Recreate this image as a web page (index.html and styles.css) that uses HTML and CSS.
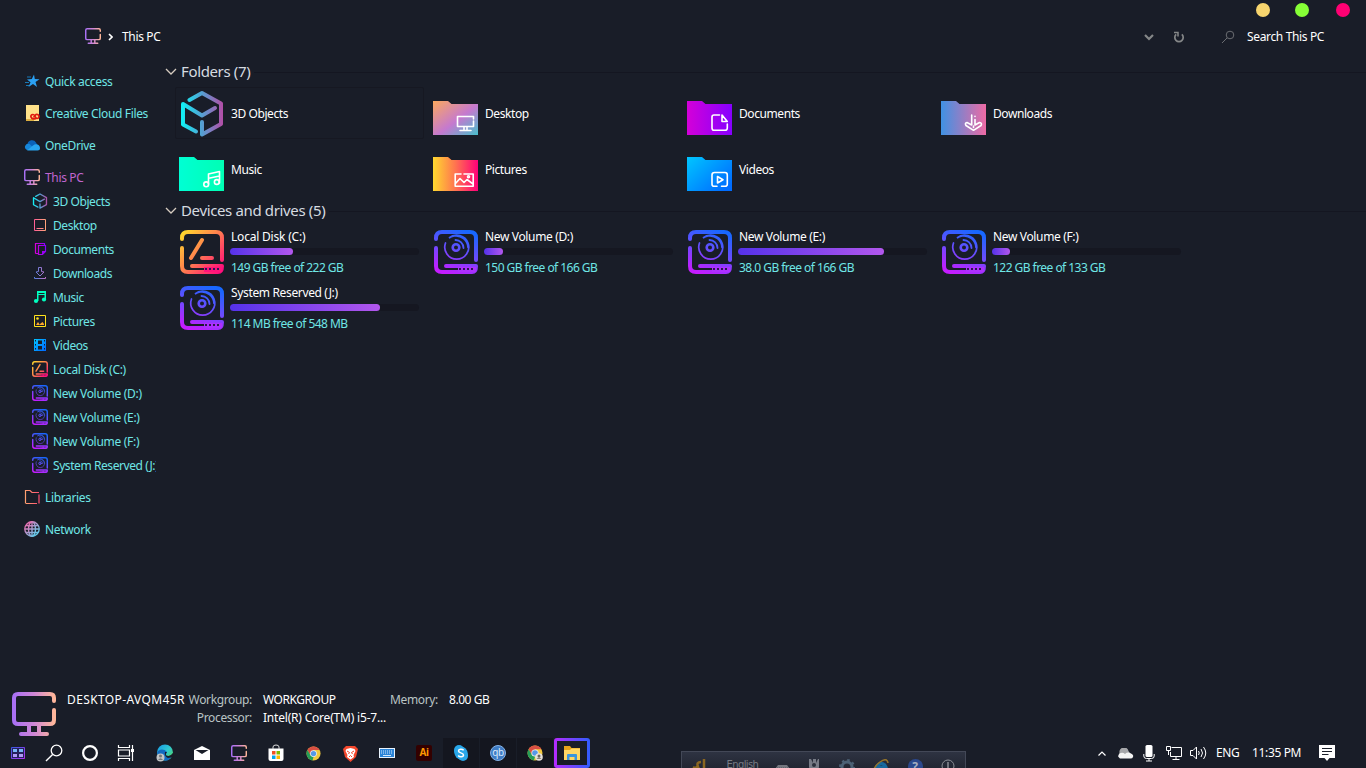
FILE: index.html
```html
<!DOCTYPE html>
<html lang="en">
<head>
<meta charset="utf-8">
<title>This PC</title>
<link rel="stylesheet" href="styles.css">
</head>
<body>
<svg class="defs" width="0" height="0" aria-hidden="true">
  <defs>
    <linearGradient id="gPc" x1="0" x2="1"><stop offset="0" stop-color="#a970f5"/><stop offset=".5" stop-color="#cf86d6"/><stop offset="1" stop-color="#ffb69a"/></linearGradient>
    <linearGradient id="gCube" gradientUnits="userSpaceOnUse" x1="2" y1="0" x2="42" y2="0"><stop offset="0" stop-color="#10f0f4"/><stop offset=".5" stop-color="#559fd2"/><stop offset="1" stop-color="#b050a8"/></linearGradient>
    <linearGradient id="gDrive" gradientUnits="userSpaceOnUse" x1="30" y1="0" x2="14" y2="44"><stop offset="0" stop-color="#1768ff"/><stop offset=".5" stop-color="#6c4bff"/><stop offset="1" stop-color="#c51cff"/></linearGradient>
    <linearGradient id="gDisk" gradientUnits="userSpaceOnUse" x1="0" y1="2" x2="44" y2="42"><stop offset="0" stop-color="#ffe02a"/><stop offset=".5" stop-color="#ff7a50"/><stop offset="1" stop-color="#ff0080"/></linearGradient>
    <linearGradient id="gDesk" x1="0" y1="0" x2="1" y2="1"><stop offset="0" stop-color="#fba95e"/><stop offset=".55" stop-color="#c579cf"/><stop offset="1" stop-color="#48c0cc"/></linearGradient>
    <linearGradient id="gDocs"><stop offset="0" stop-color="#d400d8"/><stop offset="1" stop-color="#8600ff"/></linearGradient>
    <linearGradient id="gDown"><stop offset="0" stop-color="#3f92e4"/><stop offset="1" stop-color="#ee6aa4"/></linearGradient>
    <linearGradient id="gMusic"><stop offset="0" stop-color="#00ffd4"/><stop offset="1" stop-color="#00ffb4"/></linearGradient>
    <linearGradient id="gPics"><stop offset="0" stop-color="#ffd92f"/><stop offset=".5" stop-color="#ff7350"/><stop offset="1" stop-color="#ff0079"/></linearGradient>
    <linearGradient id="gVids" x1="0" y1="0" x2="1" y2=".8"><stop offset="0" stop-color="#00c6ff"/><stop offset="1" stop-color="#006cff"/></linearGradient>
    <linearGradient id="gPink"><stop offset="0" stop-color="#ff5f94"/><stop offset="1" stop-color="#ffa27a"/></linearGradient>
    <linearGradient id="gLib"><stop offset="0" stop-color="#ffa070"/><stop offset="1" stop-color="#ff4f72"/></linearGradient>
    <linearGradient id="gNet" x1="0" y1="0" x2="1" y2="1"><stop offset="0" stop-color="#ff5fa8"/><stop offset="1" stop-color="#48dcf4"/></linearGradient>
    <linearGradient id="gDl" gradientUnits="userSpaceOnUse" x1="0" y1="0" x2="14" y2="0"><stop offset="0" stop-color="#3f82e4"/><stop offset="1" stop-color="#c070c4"/></linearGradient>
    <linearGradient id="gWin" x1="0" y1="0" x2="1" y2="1"><stop offset="0" stop-color="#3a58e0"/><stop offset="1" stop-color="#b030f0"/></linearGradient>
    <linearGradient id="gEdge" x1="0" y1="0" x2="1" y2="1"><stop offset="0" stop-color="#1597e8"/><stop offset=".5" stop-color="#30c8d0"/><stop offset="1" stop-color="#57d848"/></linearGradient>

    <symbol id="cube" viewBox="0 0 44 47">
      <g fill="none" stroke="url(#gCube)" stroke-width="4" stroke-linecap="round" stroke-linejoin="round">
        <path d="M9.500 10L22 3L41 13.500V34L22 44.500V32"/><path d="M16 41.500L3 34.500V14L22 25.500L35 18"/>
      </g>
    </symbol>
    <symbol id="pc" viewBox="0 0 44 44">
      <path fill="none" stroke="url(#gPc)" stroke-width="4" stroke-linecap="round" stroke-linejoin="round" d="M42 9V6Q42 2 38 2H6Q2 2 2 6V28Q2 32 6 32H38Q42 32 42 28V18M17 33V41M27 33V41M9 42H35"/>
    </symbol>
    <symbol id="drive-case" viewBox="0 0 44 44">
      <path d="M2 9V8Q2 2 8 2H36Q42 2 42 8V30M2 18V36Q2 42 8 42H38Q42 42 42 36H12" fill="none" stroke-width="4" stroke-linecap="round" stroke-linejoin="round"/>
      <path d="M24 37H42V42H24Z" stroke="none" fill="currentColor"/>
      <path d="M25 39H41" stroke="#2b1650" stroke-width="2" stroke-dasharray="2 2"/>
    </symbol>
    <symbol id="drive" viewBox="0 0 44 44">
      <g stroke="url(#gDrive)" color="#ad30ff"><use href="#drive-case" width="44" height="44"/></g>
      <g fill="none" stroke="url(#gDrive)" stroke-linecap="round"><path d="M11.500 13A12 12 0 1 0 15 8A12 12 0 0 1 20 6A12 12 0 0 1 34 17.500" stroke-width="1.700"/><path d="M21.500 10A8 8 0 0 1 29.500 18" stroke-width="1.800"/><circle cx="22" cy="17.500" r="3.300" stroke-width="2.600"/></g>
    </symbol>
    <symbol id="disk" viewBox="0 0 44 44">
      <g stroke="url(#gDisk)" color="#ff147a"><use href="#drive-case" width="44" height="44"/></g>
      <path d="M22 10L11 28M22 28H32" fill="none" stroke="url(#gDisk)" stroke-width="4" stroke-linecap="round"/>
    </symbol>
  </defs>
</svg>

<div class="window">
  <header class="titlebar">
    <div class="caption"><i class="dot min"></i><i class="dot max"></i><i class="dot close"></i></div>
    <div class="addressbar">
      <svg class="addr-pc" width="16" height="16"><use href="#pc"/></svg>
      <svg class="addr-chev" width="5" height="8" viewBox="0 0 5 8"><path d="M1 1L4 4L1 7" fill="none" stroke="#fff" stroke-width="1.600"/></svg>
      <span class="addr-name">This PC</span>
      <svg class="drop" width="10" height="7" viewBox="0 0 10 7"><path d="M1 1L5 5L9 1" fill="none" stroke="#858788" stroke-width="2.200"/></svg>
      <svg class="refresh" width="12" height="13" viewBox="0 0 12 13"><path d="M3.200 3.300A4.200 4.200 0 1 0 8.800 3.300" fill="none" stroke="#858788" stroke-width="1.700"/><path d="M1 1.500H5V5.500" fill="none" stroke="#858788" stroke-width="1.500"/></svg>
      <svg class="search" width="14" height="14" viewBox="0 0 14 14"><path d="M1 13L6 8" stroke="#6b6d72"/><circle cx="9" cy="5" r="3.800" fill="none" stroke="#6b6d72"/></svg>
      <span class="search-text">Search This PC</span>
    </div>
  </header>

  <div class="content">
    <nav class="sidebar">
      <div class="nav top"><svg width="16" height="16" viewBox="0 0 16 16"><path d="M10 1.500L10.800 6L15.500 6.200L11.500 9L13 14L9 11L4.500 14L6.500 9.200L3 6.500L7.800 6Z" fill="#2ba0f2"/><path d="M3 4H7M1 9.500H5M2 12.500H5" stroke="#1978b4"/></svg><span>Quick access</span></div>
      <div class="nav top"><svg width="16" height="16" viewBox="0 0 16 16"><path d="M2 0H15V16H2Z" fill="#ffe28a"/><path d="M2 15H10" stroke="#dcae40" stroke-width="2"/><path d="M12 13.500C7 15.500 5 9.500 9 9.500C11 9.500 11 13 13 13.500C16 13.500 15.500 8.500 12 9.500L9.500 12.500" fill="none" stroke="#e01b10" stroke-width="1.700"/></svg><span>Creative Cloud Files</span></div>
      <div class="nav top"><svg width="16" height="16" viewBox="0 0 16 16"><path d="M3.500 7A4.600 4.600 0 0 1 12 5.500L15 11H2Z" fill="#0b62b8"/><path d="M3 13A3.200 3.200 0 1 1 5.500 7L12 13Z" fill="#1686da"/><path d="M3 13.500L9 8.500C12 6 16 8 16 11Q16 13.500 13.500 13.500Z" fill="#28a4ee"/></svg><span>OneDrive</span></div>
      <div class="nav top current"><svg width="16" height="16"><use href="#pc"/></svg><span>This PC</span></div>

      <div class="nav child"><svg width="16" height="16"><use href="#cube"/></svg><span>3D Objects</span></div>
      <div class="nav child"><svg width="16" height="16" viewBox="0 0 16 16"><path d="M2.500 2.500H13.500V13.500H2.500ZM4.500 11.500H11.500" fill="none" stroke="url(#gPink)"/></svg><span>Desktop</span></div>
      <div class="nav child"><svg width="16" height="16" viewBox="0 0 16 16"><path d="M3.500 12.500V2.500H12.500V4M3.500 12.500H6M6.500 4.500H13.500V10.500L10.500 13.500H6.500Z" fill="none" stroke="url(#gDocs)" stroke-width="1.200"/><path d="M10 14V10H14Z" fill="#9a00f4"/></svg><span>Documents</span></div>
      <div class="nav child"><svg width="16" height="16" viewBox="0 0 16 16"><path d="M6.500 2.500H9.500V6.500L12 7L8 11L4 7L6.500 6.500ZM2.500 12V13.500H13.500V12" fill="none" stroke="url(#gDl)"/></svg><span>Downloads</span></div>
      <div class="nav child"><svg width="16" height="16" viewBox="0 0 16 16"><path d="M5 2H14V11H12.500V6H6.500V12H5Z" fill="#00ffc0"/><path d="M6.500 4.500H12.500" stroke="#191d28"/><circle cx="4" cy="12" r="2.100" fill="#00ffc0"/><circle cx="12" cy="10.500" r="2.100" fill="#00ffc0"/></svg><span>Music</span></div>
      <div class="nav child"><svg width="16" height="16" viewBox="0 0 16 16"><path d="M2.500 2.500H13.500V13.500H2.500Z" fill="none" stroke="#ffe21a"/><circle cx="5.500" cy="5.500" r="1.300" fill="#ffe21a"/><path d="M4 12L6 9L8 12ZM8 11L10.500 9L12 11V12H8Z" fill="#ffa82a"/></svg><span>Pictures</span></div>
      <div class="nav child"><svg width="16" height="16" viewBox="0 0 16 16"><path d="M2 2H14V14H2Z" fill="url(#gVids)"/><path d="M6 3.500H10V7H6ZM6 9H10V12.500H6Z" fill="#191d28"/><path d="M3.500 3V14M12.500 3V14" stroke="#191d28" stroke-dasharray="1.500 2.500"/></svg><span>Videos</span></div>
      <div class="nav child volume"><svg width="16" height="16"><use href="#disk"/></svg><span>Local Disk (C:)</span></div>
      <div class="nav child volume"><svg width="16" height="16"><use href="#drive"/></svg><span>New Volume (D:)</span></div>
      <div class="nav child volume"><svg width="16" height="16"><use href="#drive"/></svg><span>New Volume (E:)</span></div>
      <div class="nav child volume"><svg width="16" height="16"><use href="#drive"/></svg><span>New Volume (F:)</span></div>
      <div class="nav child reserved"><svg width="16" height="16"><use href="#drive"/></svg><span>System Reserved (J:)</span></div>

      <div class="nav top"><svg width="16" height="16" viewBox="0 0 16 16"><path d="M1.500 14.500V1.500H6L8 3.500H15M15 5.500V14.500M2 14.500H13" fill="none" stroke="url(#gLib)" stroke-width="1.200"/></svg><span>Libraries</span></div>
      <div class="nav top"><svg width="16" height="16" viewBox="0 0 16 16"><g fill="none" stroke="url(#gNet)" stroke-width="1.400"><circle cx="8" cy="8" r="7.200"/><ellipse cx="8" cy="8" rx="3.500" ry="7.200"/><path d="M8 1L8.010 15M1 8L15 8.010M2 4.500Q8 5 14 4.500M2 11.500Q8 11 14 11.500"/></g></svg><span>Network</span></div>
    </nav>

    <main class="main">
      <h2 class="group"><svg width="12" height="8" viewBox="0 0 12 8"><path d="M1 1L6 6L11 1" fill="none" stroke="#d6ccc0" stroke-width="1.300"/></svg><span>Folders (7)</span><i></i></h2>
      <div class="grid">
        <div class="tile selected"><svg class="cube" width="44" height="47"><use href="#cube"/></svg><span>3D Objects</span></div>
        <div class="tile"><svg class="folder" width="46" height="34" viewBox="0 0 46 34"><path d="M0 0H15L18.500 3H45V34H0Z" fill="url(#gDesk)"/><path d="M40.500 18V15.500H24.500V25.500H40.500V20M31 26V29.500M34 26V29.500M27 29.500H38" class="glyph"/></svg><span>Desktop</span></div>
        <div class="tile"><svg class="folder" width="46" height="34" viewBox="0 0 46 34"><path d="M0 0H15L18.500 3H45V34H0Z" fill="url(#gDocs)"/><path d="M32.500 14H27Q25 14 25 16V27Q25 29.300 27 29.300H38Q40.300 29.300 40.300 27V23M35 14L40.300 20.500H35Z" class="glyph"/></svg><span>Documents</span></div>
        <div class="tile"><svg class="folder" width="46" height="34" viewBox="0 0 46 34"><path d="M0 0H15L18.500 3H45V34H0Z" fill="url(#gDown)"/><path d="M30.700 14V24L26 21.500Q23.500 22 25 24.500L32.500 29.300L40 24.500Q41.500 22 38.500 21.500L34 24V18.500M34 15.300V15.500M32.500 25V26.500" class="glyph"/></svg><span>Downloads</span></div>
        <div class="tile"><svg class="folder" width="46" height="34" viewBox="0 0 46 34"><path d="M0 0H15L18.500 3H45V34H0Z" fill="url(#gMusic)"/><path d="M29.500 27V17L40.500 14.500V26M31 21L40.500 19" class="glyph"/><circle cx="27.200" cy="27.300" r="2.400" class="glyph"/><circle cx="37.800" cy="25" r="2.400" class="glyph"/></svg><span>Music</span></div>
        <div class="tile"><svg class="folder" width="46" height="34" viewBox="0 0 46 34"><path d="M0 0H15L18.500 3H45V34H0Z" fill="url(#gPics)"/><path d="M28 17H22.200V29.300H40.200V17H31M22 27L27 21.500L31 25.500L34 22.500L40 27" class="glyph"/><circle cx="35.500" cy="19.800" r="1" class="glyph"/></svg><span>Pictures</span></div>
        <div class="tile"><svg class="folder" width="46" height="34" viewBox="0 0 46 34"><path d="M0 0H15L18.500 3H45V34H0Z" fill="url(#gVids)"/><path d="M30 29.300H27Q25 29.300 25 27.300V18Q25 15.500 27.500 15.500H38Q40.300 15.500 40.300 18V27.300Q40.300 29.300 38 29.300H34.500M30.500 19.500V26L36 22.700Z" class="glyph"/></svg><span>Videos</span></div>
      </div>
      <h2 class="group drives-head"><svg width="12" height="8" viewBox="0 0 12 8"><path d="M1 1L6 6L11 1" fill="none" stroke="#d6ccc0" stroke-width="1.300"/></svg><span>Devices and drives (5)</span><i></i></h2>
      <div class="grid">
        <div class="tile drive"><svg width="44" height="44"><use href="#disk"/></svg><div class="info"><b class="wide">Local Disk (C:)</b><div class="bar"><div class="fill" style="width:63px"></div></div><em>149 GB free of 222 GB</em></div></div>
        <div class="tile drive"><svg width="44" height="44"><use href="#drive"/></svg><div class="info"><b>New Volume (D:)</b><div class="bar"><div class="fill" style="width:19px"></div></div><em>150 GB free of 166 GB</em></div></div>
        <div class="tile drive"><svg width="44" height="44"><use href="#drive"/></svg><div class="info"><b>New Volume (E:)</b><div class="bar"><div class="fill" style="width:146px"></div></div><em>38.0 GB free of 166 GB</em></div></div>
        <div class="tile drive"><svg width="44" height="44"><use href="#drive"/></svg><div class="info"><b>New Volume (F:)</b><div class="bar"><div class="fill" style="width:18px"></div></div><em>122 GB free of 133 GB</em></div></div>
        <div class="tile drive"><svg width="44" height="44"><use href="#drive"/></svg><div class="info"><b>System Reserved (J:)</b><div class="bar"><div class="fill" style="width:150px"></div></div><em>114 MB free of 548 MB</em></div></div>
      </div>
    </main>
  </div>

  <footer class="details">
    <svg width="44" height="44"><use href="#pc"/></svg>
    <div class="machine">DESKTOP-AVQM45R</div>
    <div class="props">
      <span class="label">Workgroup:</span><span class="value">WORKGROUP</span><span class="label">Memory:</span><span class="value mem">8.00 GB</span>
      <span class="label">Processor:</span><span class="value cpu">Intel(R) Core(TM) i5-7...</span>
    </div>
  </footer>

  <div class="taskbar">
    <div class="task"><svg width="14" height="12" viewBox="0 0 14 12"><path d="M.5.500H13.500V11.500H.5Z" fill="#26205c" stroke="url(#gWin)"/><path d="M2 2H6V5H2ZM8 2H12V5H8Z" fill="#79b5f5"/><path d="M2 7H6V10H2ZM8 7H12V10H8Z" fill="#b09af5"/></svg></div>
    <div class="task"><svg width="18" height="18" viewBox="0 0 18 18"><circle cx="11.500" cy="6.500" r="5.300" fill="none" stroke="#fff" stroke-width="1.300"/><path d="M1 17L7.600 10.400" stroke="#fff" stroke-width="1.400"/></svg></div>
    <div class="task"><svg width="18" height="18" viewBox="0 0 18 18"><circle cx="9" cy="9" r="6.900" fill="none" stroke="#fff" stroke-width="2.200"/></svg></div>
    <div class="task"><svg width="18" height="18" viewBox="0 0 18 18"><path d="M1.500 1V3.500H12.500V1M1.500 17V14.500H12.500V17M1.500 6H12.500V12H1.500ZM15.500 1V17" fill="none" stroke="#fff" stroke-width="1.200"/><path d="M14 5H17V8H14Z" fill="#fff"/></svg></div>
    <div class="apps">
      <div class="task"><svg width="18" height="18" viewBox="0 0 18 18"><circle cx="9" cy="8.500" r="8" fill="url(#gEdge)"/><path d="M1 9C2 5 8 4 11 8C11 10 9 10 10 12C12 14 15 13 16 12C14 17 8 18 5 15Z" fill="#1169c0"/><path d="M11 8Q9 10 10.500 11.500Q14 13 17 9L17.500 13L12 14Q8 12 9 8Z" fill="#191d28"/><circle cx="4.500" cy="13.500" r="4" fill="#c2c4c6"/><circle cx="4.500" cy="12" r="1.500" fill="#74777a"/><path d="M2 16Q4.500 12.500 7 16Z" fill="#74777a"/></svg></div>
      <div class="task"><svg width="16" height="16" viewBox="0 0 16 16"><path d="M0 5L8 1L16 5V15H0Z" fill="#fff"/><path d="M1.500 5H14.500L8 9Z" fill="#191d28"/></svg></div>
      <div class="task"><svg width="16" height="16"><use href="#pc"/></svg></div>
      <div class="task"><svg width="16" height="18" viewBox="0 0 16 18"><path d="M.5 4.500H15.500V15Q15.500 17 13.500 17H2.500Q.5 17 .5 15Z" fill="#fff"/><path d="M5 5V3Q5 1 8 1Q11 1 11 3V5" fill="none" stroke="#ddd"/><path d="M4 7H7.500V10.500H4Z" fill="#f25022"/><path d="M8.500 7H12V10.500H8.500Z" fill="#7fba00"/><path d="M4 11.500H7.500V15H4Z" fill="#00a4ef"/><path d="M8.500 11.500H12V15H8.500Z" fill="#ffb900"/></svg></div>
      <div class="task"><svg width="15" height="15" viewBox="0 0 16 16"><circle cx="8" cy="8" r="7.500" fill="#f2c83e"/><path d="M1.500 4.300A7.500 7.500 0 0 1 14.500 4.300H8L5 10Z" fill="#d94f43"/><path d="M1.500 4.300L5 10L8 11.500L7 15.400A7.500 7.500 0 0 1 1.500 4.300" fill="#249d58"/><circle cx="8" cy="8" r="3.600" fill="#eee"/><circle cx="8" cy="8" r="2.800" fill="#5698e8"/></svg></div>
      <div class="task"><svg width="15" height="17" viewBox="0 0 15 17"><path d="M3 1H12L15 4L13 12L7.500 17L2 12L0 4Z" fill="#f4482d"/><path d="M3.500 4L7.500 3L11.500 4L12.500 6L10.500 10L11 12L7.500 14.500L4 12L4.500 10L2.500 6Z" fill="#fff"/><path d="M4 6L6.500 7.500L5.500 9M11 6L8.500 7.500L9.500 9M6 12L7.500 10.500L9 12" fill="none" stroke="#f4482d"/></svg></div>
      <div class="task"><svg width="16" height="10" viewBox="0 0 16 10"><path d="M0 0H16V10H0Z" fill="#e9f3fd"/><path d="M1 1H15V9H1Z" fill="#2a84d8"/><path d="M2 3H14M2 5H14" stroke="#d4e9fb" stroke-dasharray="1 1"/><path d="M4 7.500H12" stroke="#d4e9fb"/></svg></div>
      <div class="task"><span class="ai">Ai</span></div>
      <div class="task open"><svg width="16" height="16" viewBox="0 0 16 16"><rect x="1" y="0" width="10" height="11" rx="5" fill="#29a7ea"/><rect x="5" y="5" width="10" height="11" rx="5" fill="#29a7ea"/><circle cx="8" cy="8" r="6.500" fill="#29a7ea"/><path d="M10.700 5.300C9 3.500 5.500 4 5.500 6C5.500 8.500 10.500 7.200 10.500 10C10.500 12 6.500 12.500 5.200 10.500" fill="none" stroke="#fff" stroke-width="1.500"/></svg></div>
      <div class="task open"><span class="qb">qb</span></div>
      <div class="task open"><svg width="16" height="16" viewBox="0 0 16 16"><circle cx="8" cy="8" r="7.500" fill="#f2c83e"/><path d="M1.500 4.300A7.500 7.500 0 0 1 14.500 4.300H8L5 10Z" fill="#d94f43"/><path d="M1.500 4.300L5 10L8 11.500L7 15.400A7.500 7.500 0 0 1 1.500 4.300" fill="#249d58"/><circle cx="8" cy="8" r="3.600" fill="#eee"/><circle cx="8" cy="8" r="2.800" fill="#5698e8"/><circle cx="12" cy="12" r="3.800" fill="#e6e2dc"/><circle cx="12" cy="11" r="1.500" fill="#6b6258"/><path d="M9.500 14Q12 10.500 14.500 14Z" fill="#8a8078"/></svg></div>
      <div class="task active"><svg width="16" height="14" viewBox="0 0 16 14"><path d="M0 0H6L7.500 2H16V14H0Z" fill="#e6a41a"/><path d="M0 4L6 4L7.500 2.500H16V14H0Z" fill="#ffd765"/><path d="M3 14V9Q3 8 4 8H12Q13 8 13 9V14H10.500V11H5.500V14Z" fill="#3a95dd"/></svg></div>
    </div>

    <div class="tray">
      <svg class="t-up" width="8" height="5" viewBox="0 0 8 5"><path d="M.5 4.500L4 1L7.500 4.500" fill="none" stroke="#fff" stroke-width="1.200"/></svg>
      <svg class="t-cloud" width="17" height="11" viewBox="0 0 17 11"><path d="M2.500 5A4.500 4.500 0 0 1 11.500 3L15 9H1Z" fill="#a6a7aa"/><path d="M3 10.500A3 3 0 0 1 3.500 5Q6 4 8 6Q11 3.500 14 5.500Q17 7 16 9Q15.500 10.500 13.500 10.500Z" fill="#f4f4f4"/></svg>
      <svg class="t-mic" width="12" height="17" viewBox="0 0 12 17"><rect x="2.500" y="0" width="7" height="12" rx="1.500" fill="#fff"/><path d="M.8 9V11Q.8 13.500 3.500 13.500H8.500Q11.200 13.500 11.200 11V9M6 13.500V16M3 16H9" fill="none" stroke="#fff"/></svg>
      <svg class="t-net" width="17" height="14" viewBox="0 0 17 14"><path d="M5.500 1.500H15.500V10.500H4.500V6M10 10.500V13.500M6.500 13.500H13.500M.5.500H4.500V4.500H.5ZM2.500 4.500V9" fill="none" stroke="#fff"/></svg>
      <svg class="t-vol" width="17" height="14" viewBox="0 0 17 14"><path d="M.5 4.500H3L6.500 1V13L3 9.500H.5Z" fill="none" stroke="#fff"/><path d="M8.500 5Q10 7 8.500 9M11 3Q14 7 11 11M13.500 1Q18 7 13.500 13" fill="none" stroke="#fff"/></svg>
      <span class="t-lang">ENG</span>
      <span class="t-time">11:35 PM</span>
      <svg class="t-note" width="16" height="16" viewBox="0 0 16 16"><path d="M0 0H16V13H10.500L8 16L5.500 13H0Z" fill="#fff"/><path d="M3 3.500H13M3 6.500H13M3 9.500H9.500" stroke="#191d28"/></svg>
    </div>
  </div>

  <div class="langbar">
    <svg class="lb-om" width="16" height="16" viewBox="0 0 16 16"><path d="M1 8Q5 10 6 6M9 3Q4 3 6 8Q8 13 12 10V0" fill="none" stroke="#8a6620" stroke-width="2.500"/></svg>
    <span>English</span>
    <svg class="lb-kb" width="15" height="10" viewBox="0 0 15 10"><path d="M3 0H12L15 4V10H0V4Z" fill="#74777f"/><path d="M2 3H13" stroke="#4b4e58" stroke-dasharray="1 1"/></svg>
    <svg class="lb-tool" width="12" height="16" viewBox="0 0 12 16"><path d="M1 0H3L5 4V0H8V4L10 0H11V8L9 16H3L1 8Z" fill="#777b86"/><circle cx="6" cy="6" r="2" fill="#2b303c"/></svg>
    <svg class="lb-gear" width="16" height="16" viewBox="0 0 16 16"><circle cx="8" cy="8" r="5" fill="none" stroke="#4c6175" stroke-width="3"/><circle cx="8" cy="8" r="7" fill="none" stroke="#4c6175" stroke-width="2" stroke-dasharray="2.500 3"/></svg>
    <svg class="lb-ie" width="16" height="16" viewBox="0 0 16 16"><path d="M13 11A5 5 0 1 1 13 8H5" fill="none" stroke="#17689c" stroke-width="3"/><path d="M1 13Q0 8 7 3T15 4" fill="none" stroke="#94742a" stroke-width="1.500"/></svg>
    <b class="lb-help">?</b>
    <svg class="lb-info" width="14" height="14" viewBox="0 0 14 14"><circle cx="7" cy="7" r="6" fill="none" stroke="#8a8d94"/><path d="M7 3V9" stroke="#8a8d94" stroke-width="1.500"/></svg>
  </div>
</div>
</body>
</html>
```
FILE: styles.css
```css
* { box-sizing: border-box; }
body { margin: 0; background: #191d28; color: #fff; font: 12px/16px "Noto Sans", "Open Sans", sans-serif; letter-spacing: -0.35px; }
svg { display: block; flex: none; }
.defs { position: absolute; }
.window { position: relative; width: 1366px; height: 768px; display: flex; flex-direction: column; overflow: hidden; }
span, b, em { white-space: nowrap; font-weight: 400; font-style: normal; }

.titlebar { height: 60px; flex: none; }
.caption { height: 20px; display: flex; justify-content: flex-end; align-items: center; padding-right: 16px; }
.dot { width: 14px; height: 14px; border-radius: 50%; }
.min { background: #f7d56e; margin-right: 25px; }
.max { background: #86ff36; margin-right: 27px; }
.close { background: #ff0073; }
.addressbar { height: 34px; display: flex; align-items: center; padding: 0 41px 0 85px; }
.addr-pc { margin-bottom: 2px; }
.addr-chev { margin: 0 9px 0 7px; }
.drop { margin-left: auto; margin-right: 19px; }
.refresh { margin-right: 36px; }
.search { margin-right: 12px; }
.search-text { width: 78px; }

.content { flex: 1; display: flex; min-height: 0; }
.sidebar { width: 156px; padding-top: 1px; overflow: hidden; }
.nav { height: 24px; display: flex; align-items: center; color: #6fe6e6; }
.nav span, .tile > span { padding-top: 1px; line-height: 17px; }
.nav.top { margin-top: 8px; padding-left: 24px; gap: 5px; }
.nav.child { padding-left: 32px; gap: 5px; letter-spacing: -0.42px; }
.nav.volume { letter-spacing: -0.3px; }
.nav.current { color: #c065d0; }

.main { flex: 1; padding-left: 9px; }
.group { height: 24px; margin: 0 0 1px; display: flex; align-items: center; gap: 4px; color: #d6dbe0; font-size: 15px; font-weight: 400; letter-spacing: -0.36px; }
.group span { padding-bottom: 2px; }
.group i { flex: 1; height: 1px; background: #141621; }
.drives-head { margin-top: 2px; }
.grid { display: grid; grid-template-columns: repeat(4, 254px); grid-auto-rows: 56px; padding-left: 10px; }
.tile { display: flex; align-items: center; padding-left: 4px; letter-spacing: -0.42px; }
.tile.selected { height: 52px; width: 249px; margin-top: 2px; border: 1px solid #161822; border-radius: 2px; padding-left: 4px; }
.cube { margin-right: 7px; }
.folder { margin: 10px 6px 0 0; }
.glyph { fill: none; stroke: #fff; stroke-width: 1.6; stroke-linejoin: round; stroke-linecap: round; }
.drive { padding-left: 5px; gap: 6px; }
.info { width: 189px; height: 50px; display: flex; flex-direction: column; padding-top: 2px; }
.info b, .info em { padding-left: 1px; letter-spacing: -0.35px; }
.info b.wide { letter-spacing: -0.2px; }
.bar { height: 7px; margin: 3px 0 5px; background: #151721; border-radius: 3.5px; }
.fill { height: 7px; border-radius: 3.5px; background: linear-gradient(90deg, #5532ea, #b257ed); }
.info em { color: #6fe6e6; letter-spacing: -0.54px; }

.details { height: 58px; flex: none; display: flex; padding-left: 12px; }
.details svg { margin-top: 12px; }
.machine { width: 119px; margin: 12px 0 0 11px; white-space: nowrap; letter-spacing: 0.38px; }
.props { display: grid; grid-template-columns: 67px 116px 48px 80px; column-gap: 11px; grid-auto-rows: 18px; margin-top: 12px; margin-left: -1px; }
.props .label { color: #b9c4c4; text-align: right; }
.value { letter-spacing: -0.45px; }
.cpu { grid-column: span 3; letter-spacing: -0.2px; }

.taskbar { height: 30px; flex: none; display: flex; }
.task { width: 36px; height: 30px; display: flex; align-items: center; justify-content: center; }
.apps { display: flex; gap: 1px; margin-left: 3px; }
.open { background: #14161f; }
.active { border: 3px solid transparent; border-radius: 3px; background: linear-gradient(#191d28, #191d28) padding-box, linear-gradient(90deg, #b72bff, #305dff) border-box; }
.ai { width: 16px; height: 16px; background: #330000; border-radius: 2px; color: #ff9a00; font-size: 10px; font-weight: 700; text-align: center; line-height: 15px; }
.qb { width: 16px; height: 16px; border-radius: 50%; background: #3f7cc4; border: 1px solid #86b2e6; color: #dcebfc; font-size: 10px; line-height: 12px; text-align: center; }
.tray { margin-left: auto; width: 268px; display: flex; align-items: center; }
.t-cloud { margin-left: 11px; }
.t-mic { margin-left: 9px; }
.t-net { margin-left: 11px; }
.t-vol { margin-left: 7px; }
.t-lang { margin-left: 9px; width: 24px; }
.t-time { margin-left: 12px; width: 50px; }
.t-note { margin-left: 17px; }

/* Language bar floats over the taskbar, cut off by the screen edge */
.langbar { position: absolute; left: 681px; top: 751px; width: 285px; height: 24px; border: 1px solid #434857; background: linear-gradient(#2e3342, #222632 16px); display: flex; padding: 7px 10px 0; align-items: flex-start; justify-content: space-between; color: #777b84; }
.langbar span { font: 10px/12px "DejaVu Sans", sans-serif; letter-spacing: -0.6px; margin-right: -2px; }
.lb-kb { margin-top: 6px; }
.lb-help { width: 15px; height: 15px; border-radius: 50%; background: #2b488c; color: #a4aec0; text-align: center; line-height: 15px; font-weight: 700; }
```
